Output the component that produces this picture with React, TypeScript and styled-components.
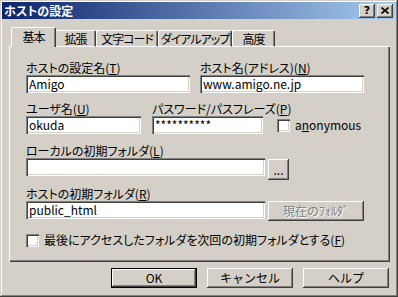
import React from "react";
import styled, { createGlobalStyle } from "styled-components";

const Global = createGlobalStyle`
  html, body { margin: 0; padding: 0; background: #d4d0c8; }
  body {
    font-family: "Noto Sans CJK JP", "Noto Sans", sans-serif;
    font-size: 12px;
    color: #000;
    font-feature-settings: "palt";
  }
  * { box-sizing: border-box; }
`;

const FONT = `"Noto Sans CJK JP", "Noto Sans", sans-serif`;

const Window = styled.div`
  width: 398px;
  height: 297px;
  background: #d4d0c8;
  padding: 2px 3px 3px 2px;
  display: flex;
  flex-direction: column;
  box-shadow: inset -1px -1px #404040, inset 1px 1px #d4d0c8, inset -2px -2px #808080, inset 2px 2px #ffffff;
`;

const TitleBar = styled.div`
  height: 17px;
  display: flex;
  align-items: center;
  padding: 0 2px 0 2px;
  background: linear-gradient(to right, #0a246a, #a6caf0);
`;

const Title = styled.div`
  flex: 1;
  color: #fff;
  font-weight: bold;
  font-size: 12px;
  line-height: 14px;
  font-family: ${FONT};
`;

const CaptionButton = styled.div<{ $gap?: number }>`
  width: 16px;
  height: 14px;
  margin-left: ${(p) => p.$gap ?? 0}px;
  background: #d4d0c8;
  display: flex;
  align-items: center;
  justify-content: center;
  box-shadow: inset -1px -1px #404040, inset 1px 1px #ffffff, inset -2px -2px #808080, inset 2px 2px #d4d0c8;
  font-family: "DejaVu Sans", sans-serif;
  font-weight: bold;
  font-size: 11px;
  line-height: 12px;
`;

const Body = styled.div`
  display: flex;
  flex-direction: column;
  padding: 8px 5px 0 7px;
`;

const TabRow = styled.div`
  display: flex;
  align-items: flex-end;
  height: 20px;
  padding-left: 4px;
  margin-bottom: -1px;
  position: relative;
  z-index: 1;
`;

const Tab = styled.div<{ $w: number; $active?: boolean }>`
  width: ${(p) => p.$w + (p.$active ? 3 : 0)}px;
  margin-left: ${(p) => (p.$active ? -2 : 0)}px;
  margin-right: ${(p) => (p.$active ? -1 : 0)}px;
  height: ${(p) => (p.$active ? 20 : 17)}px;
  background: #d4d0c8;
  border-top: 1px solid #fff;
  border-left: 1px solid #fff;
  border-right: 1px solid #404040;
  border-radius: 2px 2px 0 0;
  box-shadow: inset -1px 0 #808080;
  display: flex;
  align-items: flex-start;
  justify-content: center;
  padding-top: ${(p) => (p.$active ? 2 : 1)}px;
  font-size: 12px;
  line-height: 14px;
  letter-spacing: -1px;
  white-space: nowrap;
  position: relative;
  z-index: ${(p) => (p.$active ? 2 : 0)};
  border-bottom: ${(p) => (p.$active ? "none" : "1px solid #fff")};
`;

const Panel = styled.div`
  height: 216px;
  border-top: 1px solid #fff;
  border-left: 1px solid #fff;
  box-shadow: inset -1px -1px #404040, inset -2px -2px #808080;
  padding: 14px 0 0 16px;
  display: flex;
  flex-direction: column;
`;

const Row = styled.div<{ $mt?: number }>`
  display: flex;
  align-items: flex-end;
  margin-top: ${(p) => p.$mt ?? 0}px;
`;

const Field = styled.div<{ $w: number; $ml?: number }>`
  width: ${(p) => p.$w}px;
  margin-left: ${(p) => p.$ml ?? 0}px;
  display: flex;
  flex-direction: column;
`;

const Label = styled.div`
  height: 14px;
  line-height: 14px;
  font-size: 12px;
  white-space: nowrap;
  u { text-decoration: underline; text-underline-offset: 1px; }
`;

const Input = styled.div<{ $w?: number }>`
  width: ${(p) => (p.$w ? `${p.$w}px` : "100%")};
  height: 18px;
  background: #fff;
  box-shadow: inset 1px 1px #808080, inset 2px 2px #404040, inset -1px -1px #ffffff, inset -2px -2px #d4d0c8;
  padding: 0 3px;
  font-size: 12px;
  line-height: 18px;
  white-space: nowrap;
  overflow: hidden;
`;

const InputLine = styled.div`
  display: flex;
  align-items: flex-start;
`;

const Button = styled.div<{ $w: number; $h: number; $ml?: number; $mt?: number; $default?: boolean; $disabled?: boolean }>`
  width: ${(p) => p.$w}px;
  height: ${(p) => p.$h}px;
  margin-left: ${(p) => p.$ml ?? 0}px;
  margin-top: ${(p) => p.$mt ?? 0}px;
  background: #d4d0c8;
  display: flex;
  align-items: center;
  justify-content: center;
  font-size: 12px;
  line-height: 14px;
  white-space: nowrap;
  font-feature-settings: normal;
  color: ${(p) => (p.$disabled ? "#808080" : "#000")};
  text-shadow: ${(p) => (p.$disabled ? "1px 1px #ffffff" : "none")};
  box-shadow: ${(p) =>
    p.$default
      ? "inset 0 0 0 1px #000, inset -2px -2px #404040, inset 2px 2px #ffffff, inset -3px -3px #808080"
      : "inset -1px -1px #404040, inset 1px 1px #ffffff, inset -2px -2px #808080, inset 2px 2px #d4d0c8"};
`;

const Check = styled.div`
  width: 13px;
  height: 13px;
  flex: none;
  background: #fff;
  box-shadow: inset 1px 1px #808080, inset 2px 2px #404040, inset -1px -1px #ffffff, inset -2px -2px #d4d0c8;
`;

const CheckLabel = styled.label<{ $ml?: number }>`
  display: flex;
  align-items: center;
  gap: 5px;
  margin-left: ${(p) => p.$ml ?? 0}px;
  height: 18px;
  font-size: 12px;
  line-height: 14px;
  white-space: nowrap;
  u { text-decoration: underline; text-underline-offset: 1px; }
`;

const ButtonRow = styled.div`
  display: flex;
  margin-top: 6px;
  padding-left: 102px;
  gap: 10px;
`;

const tabs = [
  { label: "基本", w: 42 },
  { label: "拡張", w: 41 },
  { label: "文字コード", w: 62 },
  { label: "ダイアルアップ", w: 74 },
  { label: "高度", w: 43 },
];

export default function App() {
  return (
    <>
      <Global />
      <Window>
        <TitleBar>
          <Title>ホストの設定</Title>
          <CaptionButton>?</CaptionButton>
          <CaptionButton $gap={2}>
            <svg width="8" height="7" viewBox="0 0 8 7">
              <path d="M0.5 0.5 L7.5 6.5 M7.5 0.5 L0.5 6.5" stroke="#000" strokeWidth="1.6" />
            </svg>
          </CaptionButton>
        </TitleBar>
        <Body>
          <TabRow>
            {tabs.map((t, i) => (
              <Tab key={t.label} $w={t.w} $active={i === 0}>
                {t.label}
              </Tab>
            ))}
          </TabRow>
          <Panel>
            <Row>
              <Field $w={164}>
                <Label>
                  ホストの設定名(<u>T</u>)
                </Label>
                <Input>Amigo</Input>
              </Field>
              <Field $w={164} $ml={10}>
                <Label>
                  ホスト名(アドレス)(<u>N</u>)
                </Label>
                <Input>www.amigo.ne.jp</Input>
              </Field>
            </Row>
            <Row $mt={9}>
              <Field $w={115}>
                <Label>
                  ユーザ名(<u>U</u>)
                </Label>
                <Input>okuda</Input>
              </Field>
              <Field $w={111} $ml={11}>
                <Label>
                  パスワード/パスフレーズ(<u>P</u>)
                </Label>
                <Input>**********</Input>
              </Field>
              <CheckLabel $ml={14}>
                <Check />
                <span>
                  a<u>n</u>onymous
                </span>
              </CheckLabel>
            </Row>
            <Row $mt={10}>
              <Field $w={300}>
                <Label>
                  ローカルの初期フォルダ(<u>L</u>)
                </Label>
                <InputLine>
                  <Input $w={239}></Input>
                  <Button $w={21} $h={21} $ml={3} $mt={1}>
                    ...
                  </Button>
                </InputLine>
              </Field>
            </Row>
            <Row $mt={7}>
              <Field $w={340}>
                <Label>
                  ホストの初期フォルダ(<u>R</u>)
                </Label>
                <InputLine>
                  <Input $w={239}>public_html</Input>
                  <Button $w={96} $h={20} $ml={3} $disabled>
                    現在のﾌｫﾙﾀﾞ
                  </Button>
                </InputLine>
              </Field>
            </Row>
            <Row $mt={10}>
              <CheckLabel>
                <Check />
                <span>
                  最後にアクセスしたフォルダを次回の初期フォルダとする(<u>F</u>)
                </span>
              </CheckLabel>
            </Row>
          </Panel>
          <ButtonRow>
            <Button $w={86} $h={20} $default>
              OK
            </Button>
            <Button $w={86} $h={20}>
              キャンセル
            </Button>
            <Button $w={86} $h={20}>
              ヘルプ
            </Button>
          </ButtonRow>
        </Body>
      </Window>
    </>
  );
}
